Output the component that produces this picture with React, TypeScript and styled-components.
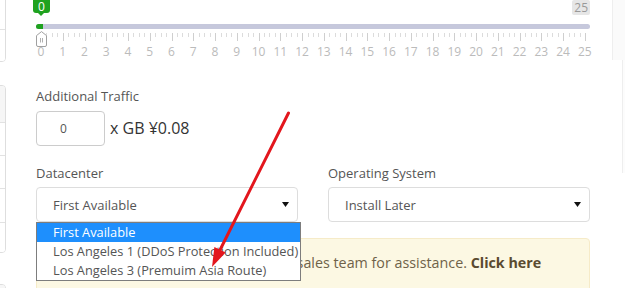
import styled, { createGlobalStyle } from "styled-components";

const GlobalStyle = createGlobalStyle`
  html, body {
    margin: 0;
    padding: 0;
    background: #fff;
  }
  body {
    font-family: "Open Sans", "Liberation Sans", sans-serif;
    color: #555;
  }
  * {
    box-sizing: border-box;
  }
`;

const MAX = 25;
const SCALE_W = 544;
const STEP = SCALE_W / MAX;

const datacenters = [
  "First Available",
  "Los Angeles 1 (DDoS Protection Included)",
  "Los Angeles 3 (Premuim Asia Route)",
];

function TickMarks() {
  const lines = [];
  for (let i = 0; i <= MAX; i++) {
    const x = Math.round(i * STEP) + 0.5;
    lines.push(<line key={`b${i}`} x1={x} x2={x} y1={0} y2={8} stroke="#cfcfcf" />);
    if (i < MAX) {
      for (let k = 1; k < 4; k++) {
        const sx = Math.round(i * STEP + (k * STEP) / 4) + 0.5;
        lines.push(<line key={`s${i}-${k}`} x1={sx} x2={sx} y1={0} y2={4} stroke="#dcdcdc" />);
      }
    }
  }
  return (
    <TickSvg width={SCALE_W + 1} height={9}>
      {lines}
    </TickSvg>
  );
}

function RangeSlider({ value }: { value: number }) {
  const labels = Array.from({ length: MAX + 1 }, (_, i) => i);
  return (
    <Slider>
      <SliderTop>
        <ValueTip>{value}</ValueTip>
        <MaxLabel>{MAX}</MaxLabel>
      </SliderTop>
      <Track>
        <TrackFill />
      </Track>
      <Scale>
        <Handle width="11" height="16" viewBox="0 0 11 16">
          <path
            d="M5.5 0.6 L10.5 4.6 V14 Q10.5 15.5 9 15.5 H2 Q0.5 15.5 0.5 14 V4.6 Z"
            fill="#fff"
            stroke="#a0a0a0"
          />
          <line x1="4.5" x2="4.5" y1="7" y2="11.5" stroke="#b0b0b0" />
          <line x1="6.5" x2="6.5" y1="7" y2="11.5" stroke="#b0b0b0" />
        </Handle>
        <TickMarks />
        <ScaleLabels>
          {labels.map((n) => (
            <span key={n}>{n}</span>
          ))}
        </ScaleLabels>
      </Scale>
    </Slider>
  );
}

function SelectArrow() {
  return (
    <svg width="7" height="5" viewBox="0 0 7 5">
      <polygon points="0,0 7,0 3.5,5" fill="#111" />
    </svg>
  );
}

function App() {
  return (
    <>
      <GlobalStyle />
      <Page>
        <LeftRail>
          <RailCard $mt={-10}>
            <RailRow $h={39} />
            <RailRow $h={31} $last />
          </RailCard>
          <RailCard $mt={23}>
            <RailRow $h={37} $shade />
            <RailRow $h={33} />
            <RailRow $h={33} />
            <RailRow $h={34} />
            <RailRow $h={29} $last />
          </RailCard>
          <RailCard $mt={31}>
            <RailRow $h={40} $shade $last />
          </RailCard>
        </LeftRail>

        <Main>
          <RangeSlider value={0} />

          <Group $top={27}>
            <FieldLabel>Additional Traffic</FieldLabel>
            <TrafficRow>
              <QtyInput>0</QtyInput>
              <PriceText>x GB ¥0.08</PriceText>
            </TrafficRow>
          </Group>

          <SelectGrid>
            <div>
              <FieldLabel>Datacenter</FieldLabel>
              <SelectBox>
                <span>First Available</span>
                <SelectArrow />
                <DropList>
                  {datacenters.map((d, i) => (
                    <DropOption key={d} $active={i === 0}>
                      {d}
                    </DropOption>
                  ))}
                </DropList>
              </SelectBox>
            </div>
            <div>
              <FieldLabel>Operating System</FieldLabel>
              <SelectBox>
                <span>Install Later</span>
                <SelectArrow />
              </SelectBox>
            </div>
          </SelectGrid>

          <Alert>
            Need a custom server? Contact our sales team for assistance.{" "}
            <strong>Click here</strong>
          </Alert>
        </Main>

        <RightRail>
          <RightTop />
          <RightMid />
        </RightRail>

        <Annotation width="625" height="288" viewBox="0 0 625 288">
          <line x1="288.5" y1="113" x2="220" y2="250" stroke="#e3161d" strokeWidth="3" strokeLinecap="round" />
          <polygon points="212,267 225.6,252.6 214.4,247" fill="#e3161d" />
        </Annotation>
      </Page>
    </>
  );
}

const Page = styled.div`
  position: relative;
  width: 625px;
  height: 288px;
  overflow: hidden;
  display: flex;
  align-items: flex-start;
`;

const LeftRail = styled.div`
  width: 6px;
  flex-shrink: 0;
  overflow: hidden;
  display: flex;
  flex-direction: column;
`;

const RailCard = styled.div<{ $mt: number }>`
  width: 40px;
  margin-left: -34px;
  margin-top: ${(p) => p.$mt}px;
  border: 1px solid #dedede;
  border-radius: 4px;
  overflow: hidden;
  flex-shrink: 0;
`;

const RailRow = styled.div<{ $h: number; $shade?: boolean; $last?: boolean }>`
  height: ${(p) => p.$h}px;
  background: ${(p) => (p.$shade ? "#f6f6f6" : "#fff")};
  border-bottom: ${(p) => (p.$last ? "none" : "1px solid #e2e2e2")};
`;

const Main = styled.div`
  width: 554px;
  margin-left: 30px;
  flex-shrink: 0;
  display: flex;
  flex-direction: column;
`;

const Slider = styled.div`
  display: flex;
  flex-direction: column;
`;

const SliderTop = styled.div`
  height: 24px;
  display: flex;
  justify-content: space-between;
  align-items: flex-start;
`;

const ValueTip = styled.div`
  position: relative;
  margin-top: -3px;
  margin-left: -3px;
  height: 16px;
  padding: 0 5px;
  background: #1fa21f;
  color: #fff;
  font-size: 12px;
  line-height: 20px;
  border-radius: 3px;

  &::after {
    content: "";
    position: absolute;
    left: 50%;
    bottom: -3px;
    margin-left: -3px;
    border-left: 3px solid transparent;
    border-right: 3px solid transparent;
    border-top: 3px solid #1fa21f;
  }
`;

const MaxLabel = styled.div`
  height: 15px;
  padding: 0 2px;
  background: #e6e6e6;
  color: #999;
  font-size: 12px;
  line-height: 15px;
  border-radius: 2px;
`;

const Track = styled.div`
  height: 5px;
  background: #c6c8dc;
  border-radius: 3px;
`;

const TrackFill = styled.div`
  width: 7px;
  height: 100%;
  background: #1fa21f;
  border-radius: 3px 0 0 3px;
`;

const Scale = styled.div`
  position: relative;
  padding: 0 5px;
`;

const Handle = styled.svg`
  position: absolute;
  left: 0;
  top: 2px;
`;

const TickSvg = styled.svg`
  display: block;
  margin-top: 4px;
`;

const ScaleLabels = styled.div`
  display: grid;
  grid-template-columns: repeat(${MAX + 1}, ${STEP}px);
  margin: 2px -${STEP / 2}px 0;
  font-size: 12px;
  line-height: 16px;
  color: #bbb;
  text-align: center;
`;

const Group = styled.div<{ $top: number }>`
  margin-top: ${(p) => p.$top}px;
`;

const FieldLabel = styled.div`
  font-size: 13px;
  line-height: 18.57px;
  color: #555;
  margin-bottom: 5px;
`;

const TrafficRow = styled.div`
  display: flex;
  align-items: center;
  gap: 5px;
`;

const QtyInput = styled.div`
  width: 69px;
  height: 35px;
  border: 1px solid #ccc;
  border-radius: 4px;
  padding-left: 23px;
  font-size: 12px;
  line-height: 33px;
  color: #555;
`;

const PriceText = styled.span`
  font-size: 16px;
  color: #333;
`;

const SelectGrid = styled.div`
  margin-top: 18px;
  display: grid;
  grid-template-columns: 1fr 1fr;
  column-gap: 30px;
`;

const SelectBox = styled.div`
  position: relative;
  height: 35px;
  border: 1px solid #ddd;
  border-radius: 4px;
  padding: 0 8px 0 16px;
  display: flex;
  align-items: center;
  justify-content: space-between;
  font-size: 13px;
  color: #555;
`;

const DropList = styled.div`
  position: absolute;
  top: 34px;
  left: -1px;
  width: 265px;
  border: 1px solid #7d7d7d;
  background: #fff;
  z-index: 2;
`;

const DropOption = styled.div<{ $active?: boolean }>`
  height: 19px;
  padding-left: 16px;
  font-size: 12.8px;
  line-height: 19px;
  white-space: nowrap;
  background: ${(p) => (p.$active ? "#1e8ffd" : "#fff")};
  color: ${(p) => (p.$active ? "#fff" : "#555")};
`;

const Alert = styled.div`
  margin-top: 16px;
  height: 80px;
  background: #fcf8e3;
  border: 1px solid #f6ebc8;
  border-radius: 4px;
  padding: 14px 15px 14px 22px;
  font-size: 14.3px;
  line-height: 20px;
  color: #6f6249;
  white-space: nowrap;

  strong {
    color: #5a4b30;
  }
`;

const RightRail = styled.div`
  flex: 1;
  margin-left: 22px;
  display: flex;
  flex-direction: column;
`;

const RightTop = styled.div`
  height: 60px;
  border-left: 1px solid #eeeeee;
  background: #fafafa;
`;

const RightMid = styled.div`
  height: 113px;
  margin-left: 10px;
  border-left: 1px solid #eeeeee;
  background: #fcfcfc;
`;

const Annotation = styled.svg`
  position: absolute;
  left: 0;
  top: 0;
  pointer-events: none;
  z-index: 5;
`;

export default App;
